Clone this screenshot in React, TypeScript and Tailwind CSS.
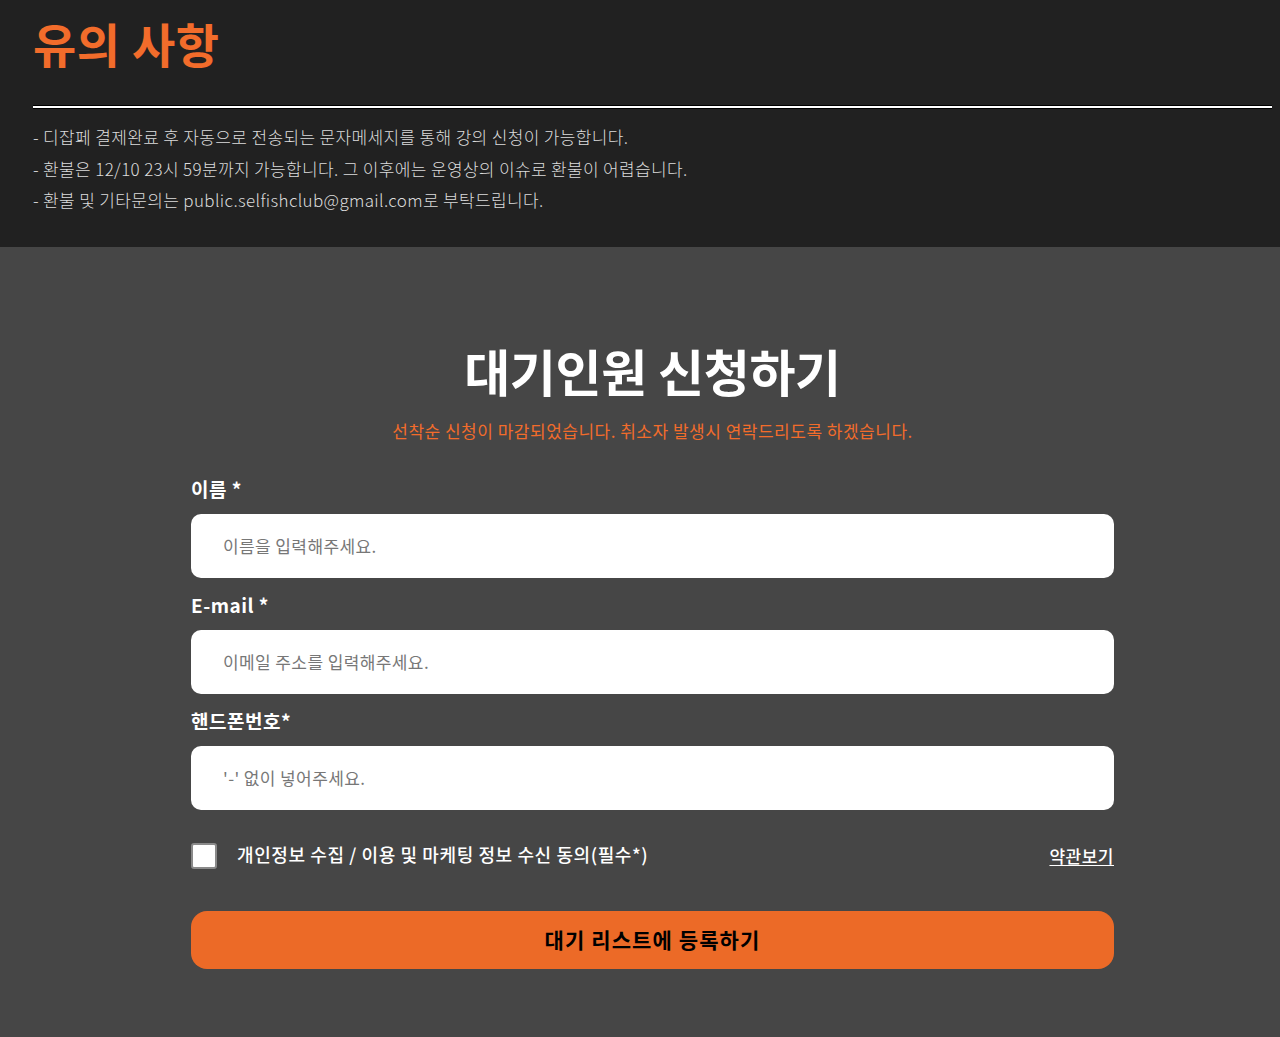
import { useState } from "react";

const font = { fontFamily: '"Noto Sans CJK KR", "Noto Sans", sans-serif' };

const notices = [
  "- 디잡페 결제완료 후 자동으로 전송되는 문자메세지를 통해 강의 신청이 가능합니다.",
  "- 환불은 12/10 23시 59분까지 가능합니다. 그 이후에는 운영상의 이슈로 환불이 어렵습니다.",
  "- 환불 및 기타문의는 public.selfishclub@gmail.com로 부탁드립니다.",
];

const fields = [
  { label: "이름 *", placeholder: "이름을 입력해주세요." },
  { label: "E-mail *", placeholder: "이메일 주소를 입력해주세요." },
  { label: "핸드폰번호*", placeholder: "'-' 없이 넣어주세요." },
];

export default function App() {
  const [agree, setAgree] = useState(false);

  return (
    <div style={font} className="min-h-screen bg-[#464646]">
      {/* notice */}
      <section className="bg-[#212121] pt-[14px] pb-[31px]">
        <h2 className="ml-[33px] text-[47px] leading-[58px] font-bold tracking-[0.6px] text-[#f26c2b]">유의 사항</h2>
        <div className="ml-[33px] mr-[8px] mt-[33px] h-[2px] bg-white border-y border-black box-content"></div>
        <ul className="ml-[33px] mt-[12px] text-[17px] leading-[31.5px] tracking-[0.35px] text-[#dcdcdc] font-light">
          {notices.map((n) => (
            <li key={n}>{n}</li>
          ))}
        </ul>
      </section>

      {/* waitlist form */}
      <section className="pl-[25px] pt-[93px] pb-[67px]">
        <h1 className="text-center text-[50px] leading-[60px] font-bold tracking-[-0.3px] text-white">대기인원 신청하기</h1>
        <p className="mt-[19px] text-center text-[17px] leading-[24px] tracking-[0.5px] text-[#f26c2b]">
          선착순 신청이 마감되었습니다. 취소자 발생시 연락드리도록 하겠습니다.
        </p>

        <form className="mx-auto mt-[34px] w-[923px] flex flex-col" onSubmit={(e) => e.preventDefault()}>
          <div className="flex flex-col gap-[15px]">
            {fields.map((f) => (
              <label key={f.label} className="flex flex-col gap-[13px]">
                <span className="text-[19px] leading-[24px] font-bold tracking-[0.5px] text-white">{f.label}</span>
                <input
                  placeholder={f.placeholder}
                  className="h-[64px] shrink-0 rounded-[10px] bg-white px-[32px] text-[17px] tracking-[0.4px] text-black placeholder:text-[#777] outline-none"
                />
              </label>
            ))}
          </div>

          <div className="mt-[33px] flex items-center">
            <button
              type="button"
              onClick={() => setAgree(!agree)}
              className="h-[26px] w-[26px] shrink-0 rounded-[3px] border-2 border-[#8a8a8a] bg-white"
            >
              {agree && <span className="block text-[16px] leading-[20px] text-black">✓</span>}
            </button>
            <span className="ml-[20px] text-[18px] leading-[24px] font-medium tracking-[0.6px] text-white -mt-[4px]">
              개인정보 수집 / 이용 및 마케팅 정보 수신 동의(필수*)
            </span>
            <a href="#" className="ml-auto text-[17px] leading-[24px] font-medium tracking-[0.5px] text-white underline underline-offset-2">
              약관보기
            </a>
          </div>

          <button
            type="submit"
            className="mt-[42px] h-[58px] shrink-0 rounded-[16px] bg-[#ec6a27] text-[21px] font-bold tracking-[1.1px] text-black"
          >
            대기 리스트에 등록하기
          </button>
        </form>
      </section>
    </div>
  );
}
